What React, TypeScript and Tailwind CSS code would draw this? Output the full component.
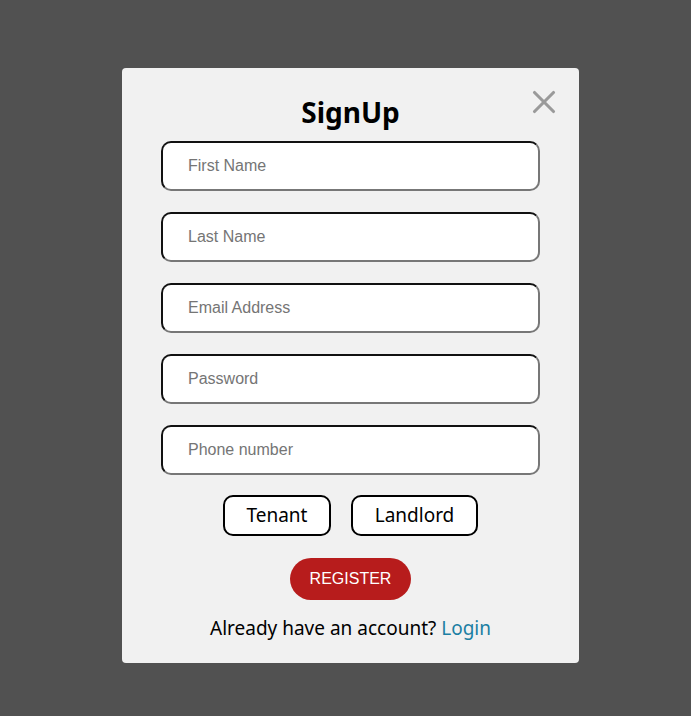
import { X } from "lucide-react";

const fields = ["First Name", "Last Name", "Email Address", "Password", "Phone number"];

export default function App() {
  return (
    <div className="w-[691px] h-[716px] bg-[#515151] flex items-start justify-center pt-[68px] pl-[10px]">
      <div className="relative w-[457px] h-[595px] bg-[#f1f1f1] rounded-[4px] flex flex-col items-center pt-[24px] font-['Noto_Sans',sans-serif]">
        <button className="absolute right-[16px] top-[15px] text-[#9a9a9a]">
          <X size={38} strokeWidth={2} />
        </button>

        <h1 className="text-[28px] font-bold leading-[40px] text-black">SignUp</h1>

        <div className="flex flex-col gap-[21px] mt-[9px]">
          {fields.map((f) => (
            <input
              key={f}
              placeholder={f}
              className="w-[379px] h-[50px] rounded-[10px] bg-white border-2 border-t-[#111] border-l-[#111] border-b-[#777] border-r-[#777] pl-[25px] text-[16px] font-['Liberation_Sans',Arial,sans-serif] placeholder:text-[#757575] outline-none"
            />
          ))}
        </div>

        {/* Role */}
        <div className="flex gap-[20px] mt-[20px]">
          <button className="w-[108px] h-[41px] rounded-[10px] bg-white border-2 border-black text-[19px] text-black">
            Tenant
          </button>
          <button className="w-[127px] h-[41px] rounded-[10px] bg-white border-2 border-black text-[19px] text-black">
            Landlord
          </button>
        </div>

        <button className="mt-[22px] w-[121px] h-[42px] rounded-full bg-[#b71c1c] text-white text-[16px] font-['Liberation_Sans',Arial,sans-serif]">
          REGISTER
        </button>

        <p className="mt-[14px] text-[19px] text-black">
          Already have an account? <a className="text-[#1b7fa3] cursor-pointer">Login</a>
        </p>
      </div>
    </div>
  );
}
